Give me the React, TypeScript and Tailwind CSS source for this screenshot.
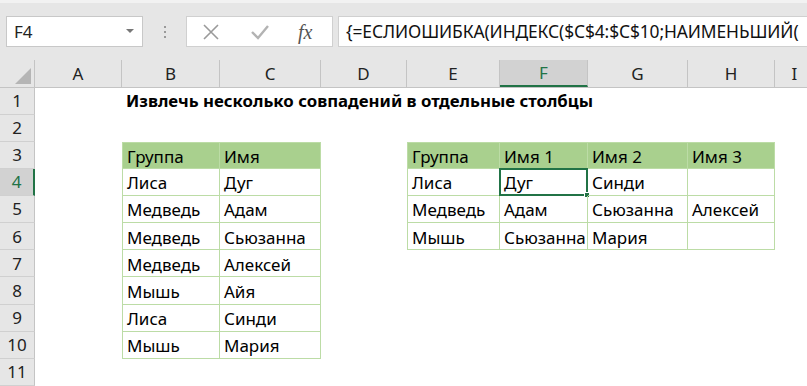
import React from "react";

const cols = [
  { key: "A", w: "w-[87px]" },
  { key: "B", w: "w-[98px]" },
  { key: "C", w: "w-[101px]" },
  { key: "D", w: "w-[86px]" },
  { key: "E", w: "w-[93px]" },
  { key: "F", w: "w-[88px]" },
  { key: "G", w: "w-[100px]" },
  { key: "H", w: "w-[87px]" },
  { key: "I", w: "w-[40px]" },
];

// cell contents by row number -> column letter
const data: Record<number, Record<string, string>> = {
  3: { B: "Группа", C: "Имя", E: "Группа", F: "Имя 1", G: "Имя 2", H: "Имя 3" },
  4: { B: "Лиса", C: "Дуг", E: "Лиса", F: "Дуг", G: "Синди", H: "" },
  5: { B: "Медведь", C: "Адам", E: "Медведь", F: "Адам", G: "Сьюзанна", H: "Алексей" },
  6: { B: "Медведь", C: "Сьюзанна", E: "Мышь", F: "Сьюзанна", G: "Мария", H: "" },
  7: { B: "Медведь", C: "Алексей" },
  8: { B: "Мышь", C: "Айя" },
  9: { B: "Лиса", C: "Синди" },
  10: { B: "Мышь", C: "Мария" },
};

const rows = [1, 2, 3, 4, 5, 6, 7, 8, 9, 10, 11];

function inTable(row: number, col: string) {
  if (["B", "C"].includes(col) && row >= 3 && row <= 10) return true;
  if (["E", "F", "G", "H"].includes(col) && row >= 3 && row <= 6) return true;
  return false;
}

function Cell({ row, col, w }: { row: number; col: string; w: string }) {
  const table = inTable(row, col);
  const text = data[row]?.[col] ?? "";
  const first = col === "B" || col === "E";
  const selected = row === 4 && col === "F";

  return (
    <div
      className={[
        "relative h-full shrink-0 flex items-center pl-[4px] text-[17px] text-black whitespace-nowrap",
        w,
        table ? "border-r border-b border-[#bcdca6]" : "",
        table && first ? "border-l" : "",
        table && row === 3 ? "border-t bg-[#a9d08e]" : "",
      ].join(" ")}
    >
      {row === 1 && col === "B" ? (
        <span className="font-bold text-[16.8px]">
          Извлечь несколько совпадений в отдельные столбцы
        </span>
      ) : (
        <span className="pt-[2px]">{text}</span>
      )}
      {selected && (
        <div className="absolute -left-[1px] -top-[1px] -right-[1px] -bottom-[1px] border-2 border-[#217346]">
          <div className="absolute -right-[4px] -bottom-[4px] w-[6px] h-[6px] bg-[#217346] border border-white" />
        </div>
      )}
    </div>
  );
}

function Toolbar() {
  return (
    <div className="h-[60px] bg-[#e6e6e6] border-t-[3px] border-[#f2f2f2] flex items-start pt-[13px] pl-[6px]">
      <div className="w-[137px] h-[31px] bg-white border border-[#c8c8c8] flex items-center justify-between pl-[7px] pr-[8px]">
        <span className="text-[17px] text-[#222]">F4</span>
        <svg width="8" height="5" viewBox="0 0 8 5">
          <path d="M0 0 L8 0 L4 4 Z" fill="#777" />
        </svg>
      </div>
      <div className="w-[43px] h-[31px] flex flex-col items-center justify-center gap-[3px]">
        <span className="w-[2px] h-[2px] bg-[#999]" />
        <span className="w-[2px] h-[2px] bg-[#999]" />
        <span className="w-[2px] h-[2px] bg-[#999]" />
      </div>
      <div className="w-[147px] h-[31px] bg-white border border-[#d0d0d0] flex items-center pl-[14px]">
        <svg width="18" height="18" viewBox="0 0 18 18" className="ml-[1px]">
          <path d="M2 2 L16 16 M16 2 L2 16" stroke="#9a9a9a" strokeWidth="1.6" />
        </svg>
        <svg width="20" height="16" viewBox="0 0 20 16" className="ml-[30px]">
          <path d="M2 8 L8 14 L18 2" stroke="#b3b3b3" strokeWidth="2.4" fill="none" />
        </svg>
        <span className="ml-[28px] font-['Liberation_Serif',serif] italic text-[20px] text-[#555] leading-none">
          fx
        </span>
      </div>
      <div className="ml-[5px] flex-1 h-[31px] bg-white border border-[#d0d0d0] border-r-0 flex items-center pl-[7px] overflow-hidden">
        <span className="text-[17.4px] text-[#111] whitespace-nowrap tracking-[-0.1px]">
          {"{=ЕСЛИОШИБКА(ИНДЕКС($C$4:$C$10;НАИМЕНЬШИЙ("}
        </span>
      </div>
    </div>
  );
}

export default function App() {
  return (
    <div className="w-[807px] h-[386px] overflow-hidden bg-white font-['Noto_Sans',sans-serif]">
      <Toolbar />

      {/* column headers */}
      <div className="h-[27.5px] flex bg-[#e6e6e6] border-b border-[#c4c4c4]">
        <div className="w-[35px] shrink-0 h-full relative border-r border-[#c4c4c4]">
          <svg width="16" height="16" viewBox="0 0 16 16" className="absolute right-[3px] bottom-[3px]">
            <path d="M16 0 L16 16 L0 16 Z" fill="#b5b5b5" />
          </svg>
        </div>
        {cols.map((c) => (
          <div
            key={c.key}
            className={[
              "shrink-0 h-full flex items-center justify-center text-[17px] border-r border-[#c4c4c4]",
              c.w,
              c.key === "F"
                ? "bg-[#d2d2d2] text-[#217346] border-b-2 border-b-[#217346]"
                : "text-[#222]",
            ].join(" ")}
          >
            {c.key}
          </div>
        ))}
      </div>

      {/* grid rows */}
      {rows.map((r) => (
        <div key={r} className="h-[27.15px] flex">
          <div
            className={[
              "w-[35px] shrink-0 h-full flex items-center justify-center text-[17px] border-b border-[#d0d0d0]",
              r === 4
                ? "bg-[#d2d2d2] text-[#217346] border-r-2 border-r-[#217346]"
                : "bg-[#e6e6e6] text-[#222] border-r border-r-[#c4c4c4]",
            ].join(" ")}
          >
            {r}
          </div>
          {cols.map((c) => (
            <Cell key={c.key} row={r} col={c.key} w={c.w} />
          ))}
        </div>
      ))}
    </div>
  );
}
